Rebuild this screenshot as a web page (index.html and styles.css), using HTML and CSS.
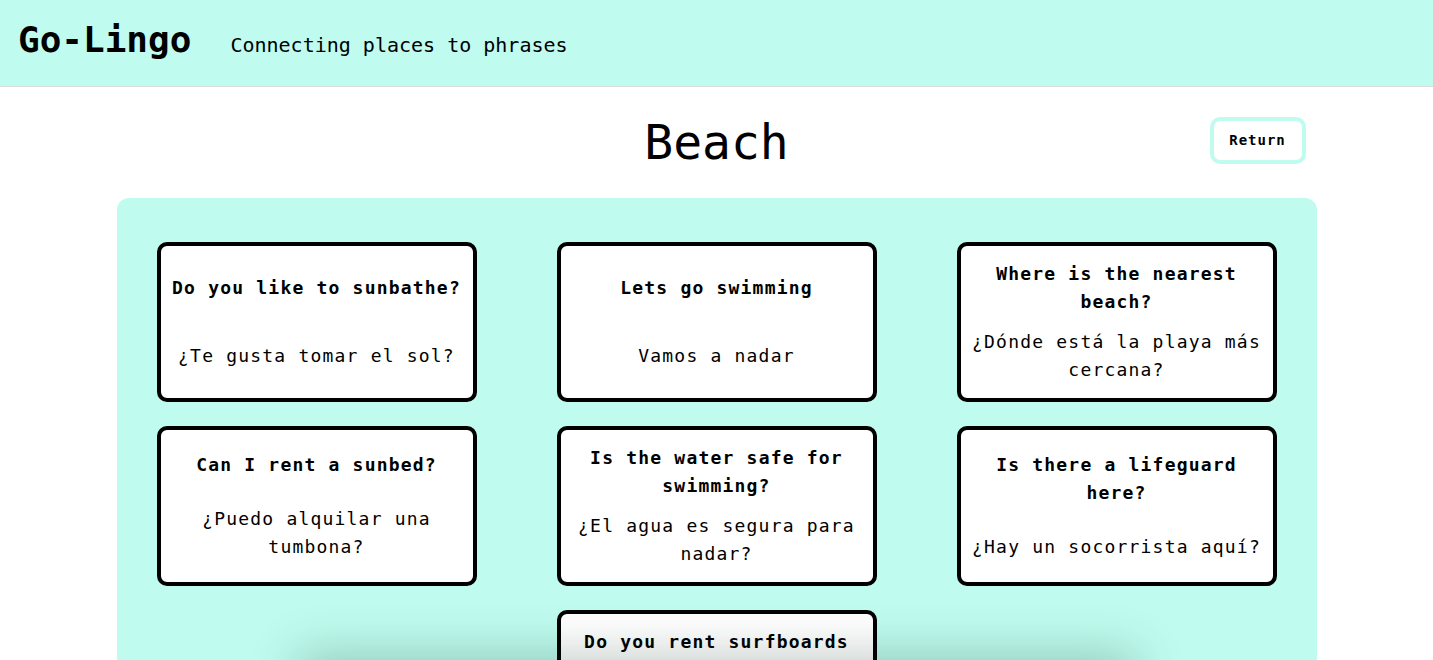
FILE: index.html
```html
<!DOCTYPE html>
<html lang="en">
<head>
<meta charset="utf-8">
<title>Go-Lingo – Beach</title>
<link rel="stylesheet" href="styles.css">
</head>
<body>
<header class="site-header">
  <h1 class="logo">Go-Lingo</h1>
  <p class="tagline">Connecting places to phrases</p>
</header>
<main class="page">
  <div class="title-row">
    <span></span>
    <h2 class="place-title">Beach</h2>
    <button class="return-btn">Return</button>
  </div>
  <section class="phrase-panel">
    <div class="phrase-card">
      <h3 class="phrase-en">Do you like to sunbathe?</h3>
      <p class="phrase-es">¿Te gusta tomar el sol?</p>
    </div>
    <div class="phrase-card">
      <h3 class="phrase-en">Lets go swimming</h3>
      <p class="phrase-es">Vamos a nadar</p>
    </div>
    <div class="phrase-card">
      <h3 class="phrase-en">Where is the nearest beach?</h3>
      <p class="phrase-es">¿Dónde está la playa más cercana?</p>
    </div>
    <div class="phrase-card">
      <h3 class="phrase-en">Can I rent a sunbed?</h3>
      <p class="phrase-es">¿Puedo alquilar una tumbona?</p>
    </div>
    <div class="phrase-card">
      <h3 class="phrase-en">Is the water safe for swimming?</h3>
      <p class="phrase-es">¿El agua es segura para nadar?</p>
    </div>
    <div class="phrase-card">
      <h3 class="phrase-en">Is there a lifeguard here?</h3>
      <p class="phrase-es">¿Hay un socorrista aquí?</p>
    </div>
    <div class="phrase-card center-col">
      <h3 class="phrase-en">Do you rent surfboards here?</h3>
      <p class="phrase-es">¿Alquilan tablas de surf aquí?</p>
    </div>
  </section>
</main>
<div class="bottom-glow"></div>
</body>
</html>
```

FILE: styles.css
```css
* { box-sizing: border-box; }

html, body {
  margin: 0;
  padding: 0;
}

body {
  font-family: "DejaVu Sans Mono", "Liberation Mono", monospace;
  color: #000;
  background: #fff;
}

.site-header {
  height: 86px;
  background: #bffcef;
  display: flex;
  align-items: baseline;
  padding: 19px 18px 0;
  gap: 39px;
  box-shadow: 0 1px 0 #dcdcdc;
}

.logo {
  margin: 0;
  font-size: 36px;
  font-weight: bold;
  line-height: 42px;
}

.tagline {
  margin: 0;
  font-size: 20px;
  letter-spacing: 0;
}

.title-row {
  width: 1200px;
  margin: 0 auto;
  height: 112px;
  display: grid;
  grid-template-columns: 1fr auto 1fr;
  align-items: center;
}

.place-title {
  margin: 0;
  font-size: 48px;
  font-weight: normal;
  line-height: 56px;
}

.return-btn {
  justify-self: end;
  margin: 0 11px 4px 0;
  width: 96px;
  height: 47px;
  background: #fff;
  border: 4px solid #bffcef;
  border-radius: 10px;
  font-family: "DejaVu Sans Mono", "Liberation Mono", monospace;
  font-size: 14px;
  font-weight: bold;
  letter-spacing: 1px;
  color: #000;
  padding: 0;
}

.phrase-panel {
  width: 1200px;
  margin: 0 auto;
  background: #bffcef;
  border-radius: 12px;
  padding: 44px 40px 40px;
  display: grid;
  grid-template-columns: repeat(3, 320px);
  column-gap: 80px;
  row-gap: 24px;
}

.phrase-card {
  height: 160px;
  background: #fff;
  border: 4px solid #000;
  border-radius: 10px;
  padding: 8px;
  display: flex;
  flex-direction: column;
  justify-content: space-around;
  text-align: center;
}

.center-col {
  grid-column: 2;
}

.phrase-en {
  margin: 0;
  font-size: 18px;
  font-weight: bold;
  line-height: 28px;
  letter-spacing: 1.2px;
}

.phrase-es {
  margin: 0;
  font-size: 18px;
  line-height: 28px;
  letter-spacing: 1.2px;
}

.bottom-glow {
  position: fixed;
  left: calc(50% - 420px);
  width: 840px;
  bottom: -60px;
  height: 60px;
  box-shadow: 0 -6px 50px rgba(0, 40, 30, 0.24);
}
```
